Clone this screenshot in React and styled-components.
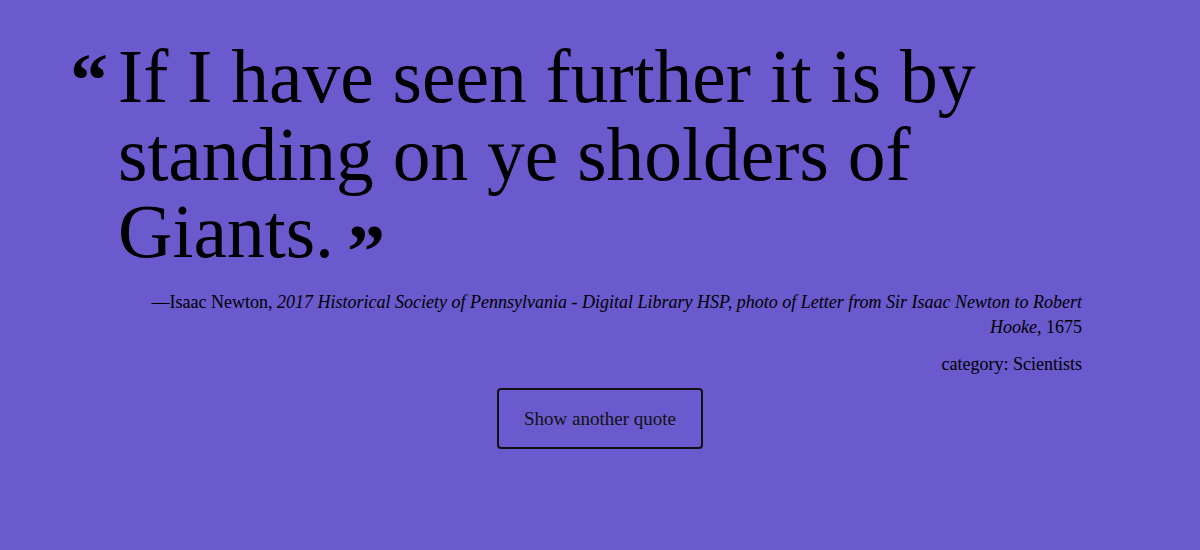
import React from "react";
import styled, { createGlobalStyle } from "styled-components";

const Global = createGlobalStyle`
  html, body { margin: 0; padding: 0; }
  body {
    background: #6a5acd;
    font-family: "Liberation Serif", "Times New Roman", serif;
    color: #000;
  }
`;

const Page = styled.main`
  min-height: 100vh;
  background: #6a5acd;
  padding-top: 38px;
  box-sizing: border-box;
`;

const Card = styled.section`
  width: 964px;
  margin: 0 auto;
  display: flex;
  flex-direction: column;
`;

const Quote = styled.blockquote`
  margin: 0;
  font-size: 75.5px;
  line-height: 77.5px;
  text-indent: -48px;
  color: #000;
`;

const Mark = styled.span`
  display: inline-block;
  text-indent: 0;
  font-weight: 700;
  font-size: ${(p) => p.$size}px;
  width: ${(p) => p.$w}px;
  margin-left: ${(p) => p.$ml || 0}px;
  vertical-align: ${(p) => p.$va};
  line-height: 0;
`;

const Attribution = styled.p`
  margin: 19px 0 0;
  font-size: 18px;
  line-height: 25px;
  text-align: right;
  em { font-style: italic; }
`;

const Category = styled.p`
  margin: 12px 0 0;
  font-size: 18px;
  line-height: 25px;
  text-align: right;
`;

const Button = styled.button`
  align-self: center;
  margin-top: 11px;
  width: 206px;
  height: 61px;
  background: transparent;
  border: 2px solid #111;
  border-radius: 4px;
  font-family: "Liberation Serif", "Times New Roman", serif;
  font-size: 19px;
  color: #111;
  cursor: pointer;
  padding-top: 3px;
`;

export default function App() {
  return (
    <Page>
      <Global />
      <Card>
        <Quote>
          <Mark $size={76} $w={48} $va="-4px">“</Mark>
          If I have seen further it is by standing on ye sholders of Giants.
          <Mark $size={76} $w={40} $ml={13} $va="-20px">”</Mark>
        </Quote>
        <Attribution>
          —Isaac Newton,{" "}
          <em>
            2017 Historical Society of Pennsylvania - Digital Library HSP, photo of
            Letter from Sir Isaac Newton to Robert Hooke
          </em>
          , 1675
        </Attribution>
        <Category>category: Scientists</Category>
        <Button>Show another quote</Button>
      </Card>
    </Page>
  );
}
